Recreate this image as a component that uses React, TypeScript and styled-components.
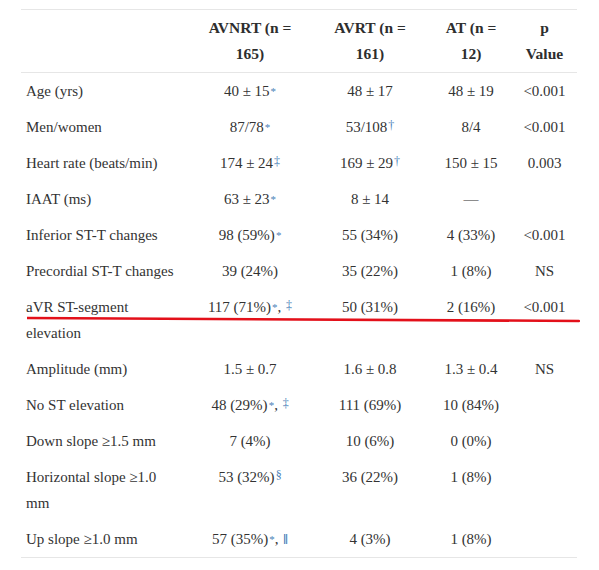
import React from "react";
import styled, { createGlobalStyle } from "styled-components";

const Global = createGlobalStyle`
  html, body { margin: 0; padding: 0; background: #fff; }
  body { font-family: Georgia, "Liberation Serif", "DejaVu Serif", serif; color: #333; }
`;

const Page = styled.div`
  position: relative;
  padding: 9px 0 0 21px;
  width: 556px;
`;

const Table = styled.table`
  width: 556px;
  border-collapse: collapse;
  table-layout: fixed;
  font-size: 15px;
  line-height: 26px;
  border-top: 1px solid #e6e6e6;
  border-bottom: 1px solid #e6e6e6;
`;

const HeadCell = styled.th`
  font-weight: bold;
  font-size: 15.5px;
  text-align: center;
  vertical-align: top;
  padding: 5px 5px;
  white-space: nowrap;
  border-bottom: 1px solid #e6e6e6;
  color: #2e2e2e;
`;

const Cell = styled.td<{ $label?: boolean }>`
  text-align: ${(p) => (p.$label ? "left" : "center")};
  vertical-align: top;
  padding: 5px 5px;
  white-space: nowrap;
`;

const Mark = styled.span<{ $kind?: "star" | "dagger" | "bar" }>`
  color: #4a7fb8;
  line-height: 0;
  font-size: ${(p) => (p.$kind === "star" ? "11px" : p.$kind === "bar" ? "14px" : "12px")};
  font-weight: ${(p) => (p.$kind === "bar" ? "bold" : "normal")};
  vertical-align: ${(p) => (p.$kind === "star" ? "1px" : p.$kind === "bar" ? "0" : "3px")};
  margin-left: 1px;
`;

const RedLine = styled.svg`
  position: absolute;
  left: 27px;
  top: 316px;
  pointer-events: none;
`;

type Row = { label: React.ReactNode; cells: React.ReactNode[] };

const star = <Mark $kind="star">*</Mark>;

const rows: Row[] = [
  { label: "Age (yrs)", cells: [<>40 ± 15{star}</>, "48 ± 17", "48 ± 19", "<0.001"] },
  { label: "Men/women", cells: [<>87/78{star}</>, <>53/108<Mark>†</Mark></>, "8/4", "<0.001"] },
  { label: "Heart rate (beats/min)", cells: [<>174 ± 24<Mark>‡</Mark></>, <>169 ± 29<Mark>†</Mark></>, "150 ± 15", "0.003"] },
  { label: "IAAT (ms)", cells: [<>63 ± 23{star}</>, "8 ± 14", "—", ""] },
  { label: "Inferior ST-T changes", cells: [<>98 (59%){star}</>, "55 (34%)", "4 (33%)", "<0.001"] },
  { label: "Precordial ST-T changes", cells: ["39 (24%)", "35 (22%)", "1 (8%)", "NS"] },
  { label: <>aVR ST-segment<br />elevation</>, cells: [<>117 (71%){star}, <Mark>‡</Mark></>, "50 (31%)", "2 (16%)", "<0.001"] },
  { label: "Amplitude (mm)", cells: ["1.5 ± 0.7", "1.6 ± 0.8", "1.3 ± 0.4", "NS"] },
  { label: "No ST elevation", cells: [<>48 (29%){star}, <Mark>‡</Mark></>, "111 (69%)", "10 (84%)", ""] },
  { label: "Down slope ≥1.5 mm", cells: ["7 (4%)", "10 (6%)", "0 (0%)", ""] },
  { label: <>Horizontal slope ≥1.0<br />mm</>, cells: [<>53 (32%)<Mark>§</Mark></>, "36 (22%)", "1 (8%)", ""] },
  { label: "Up slope ≥1.0 mm", cells: [<>57 (35%){star}, <Mark $kind="bar">‖</Mark></>, "4 (3%)", "1 (8%)", ""] },
];

export default function App() {
  return (
    <>
      <Global />
      <Page>
        <Table>
          <colgroup>
            <col style={{ width: 169 }} />
            <col style={{ width: 120 }} />
            <col style={{ width: 120 }} />
            <col style={{ width: 82 }} />
            <col style={{ width: 65 }} />
          </colgroup>
          <thead>
            <tr>
              <HeadCell />
              <HeadCell>AVNRT (n =<br />165)</HeadCell>
              <HeadCell>AVRT (n =<br />161)</HeadCell>
              <HeadCell>AT (n =<br />12)</HeadCell>
              <HeadCell>p<br />Value</HeadCell>
            </tr>
          </thead>
          <tbody>
            {rows.map((r, i) => (
              <tr key={i}>
                <Cell $label>{r.label}</Cell>
                {r.cells.map((c, j) => (
                  <Cell key={j}>{c}</Cell>
                ))}
              </tr>
            ))}
          </tbody>
        </Table>
        <RedLine width="553" height="8" viewBox="0 0 553 8">
          <path d="M0 2 Q 270 4.5 552 5" stroke="#e3101a" strokeWidth="2.5" fill="none" strokeLinecap="round" />
        </RedLine>
      </Page>
    </>
  );
}
